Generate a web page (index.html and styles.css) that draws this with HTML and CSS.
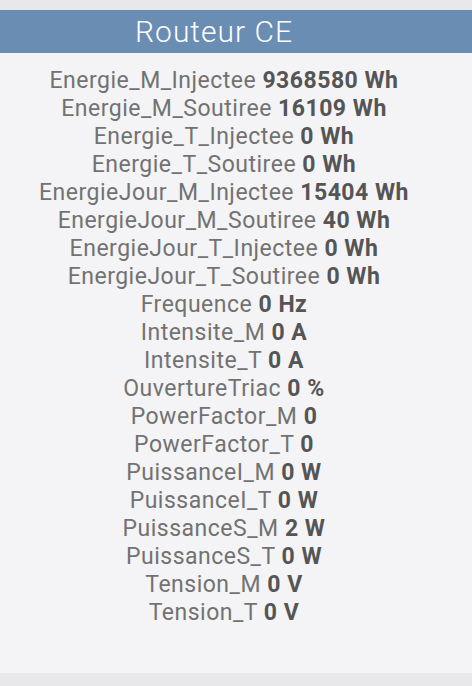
FILE: index.html
```html
<!DOCTYPE html>
<html lang="fr">
<head>
    <meta charset="UTF-8">
    <meta name="viewport" content="width=device-width, initial-scale=1.0">
    <title>Routeur CE</title>
    <link rel="stylesheet" href="styles.css">
</head>
<body>
    <div class="panel">
        <div class="panel-title">Routeur CE</div>
        <div class="panel-body">
            <div class="row">Energie_M_Injectee <b>9368580 Wh</b></div>
            <div class="row">Energie_M_Soutiree <b>16109 Wh</b></div>
            <div class="row">Energie_T_Injectee <b>0 Wh</b></div>
            <div class="row">Energie_T_Soutiree <b>0 Wh</b></div>
            <div class="row">EnergieJour_M_Injectee <b>15404 Wh</b></div>
            <div class="row">EnergieJour_M_Soutiree <b>40 Wh</b></div>
            <div class="row">EnergieJour_T_Injectee <b>0 Wh</b></div>
            <div class="row">EnergieJour_T_Soutiree <b>0 Wh</b></div>
            <div class="row">Frequence <b>0 Hz</b></div>
            <div class="row">Intensite_M <b>0 A</b></div>
            <div class="row">Intensite_T <b>0 A</b></div>
            <div class="row">OuvertureTriac <b>0 %</b></div>
            <div class="row">PowerFactor_M <b>0</b></div>
            <div class="row">PowerFactor_T <b>0</b></div>
            <div class="row">PuissanceI_M <b>0 W</b></div>
            <div class="row">PuissanceI_T <b>0 W</b></div>
            <div class="row">PuissanceS_M <b>2 W</b></div>
            <div class="row">PuissanceS_T <b>0 W</b></div>
            <div class="row">Tension_M <b>0 V</b></div>
            <div class="row">Tension_T <b>0 V</b></div>
        </div>
    </div>
</body>
</html>
```
FILE: styles.css
```css
body{
    margin: 0;
    padding-top: 10px;
    background-color: #e8e8ea;
    font-family: Roboto, "Liberation Sans", sans-serif;
}
.panel{
    box-shadow: 0 2px 3px rgba(0,0,0,0.25);
}
.panel-title{
    height: 43px;
    line-height: 43px;
    padding-right: 44px;
    text-align: center;
    font-size: 30px;
    font-weight: 300;
    letter-spacing: 1px;
    color: #fff;
    background-color: #6a8db4;
}
.panel-body{
    height: 620px;
    box-sizing: border-box;
    padding: 14px 24px 0 0;
    text-align: center;
    background-color: #f4f4f6;
}
.row{
    font-size: 23px;
    line-height: 28px;
    letter-spacing: 0.5px;
    color: #727272;
}
.row b{
    color: #555;
}
```
